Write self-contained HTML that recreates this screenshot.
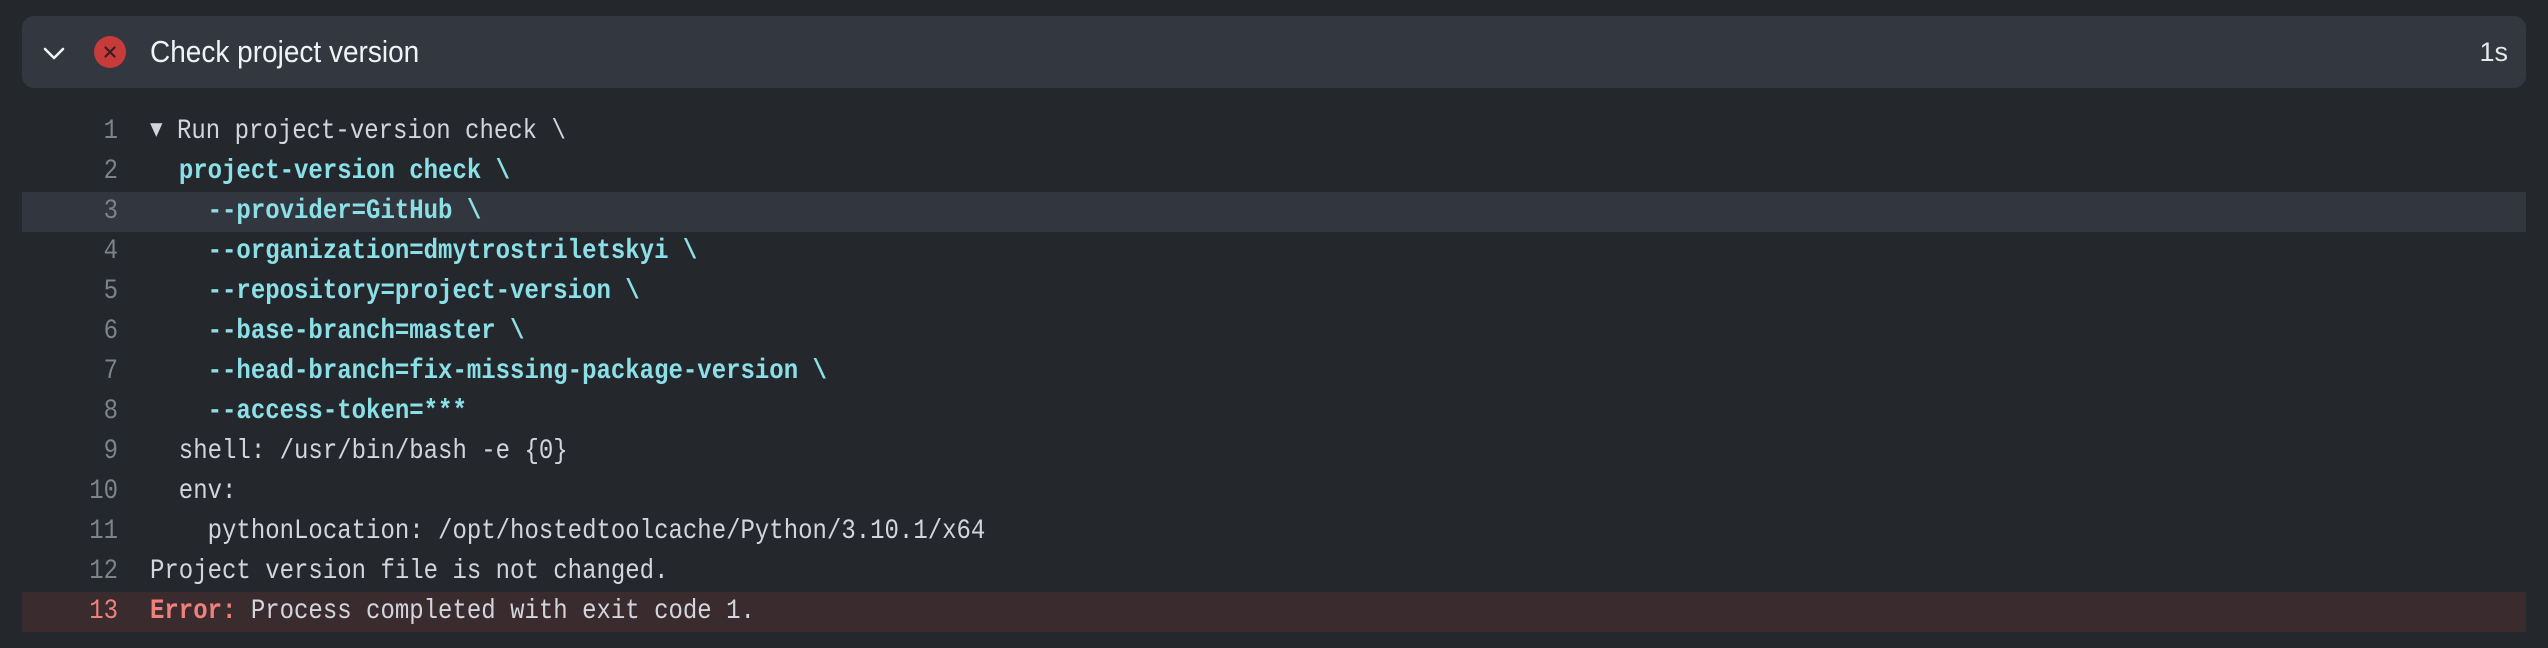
<!DOCTYPE html>
<html><head><meta charset="utf-8"><style>
html,body{margin:0;padding:0}
body{width:2548px;height:648px;background:#24272c;position:relative;overflow:hidden;font-family:"Liberation Sans",sans-serif}
.hdr{position:absolute;left:22px;top:16px;width:2504px;height:72px;background:#33373f;border-radius:12px}
.title{position:absolute;left:150px;top:16px;height:72px;line-height:72px;font-size:28px;color:#f0f3f6;transform:scaleY(1.1);transform-origin:left center}
.dur{position:absolute;right:40px;top:16px;height:72px;line-height:72px;font-size:27px;color:#e6e9ec}
.row{position:absolute;left:22px;width:2504px;height:40px;line-height:40px;font-family:"Liberation Mono",monospace;font-size:24px;color:#d2d6dc;white-space:pre}
.row .n{position:absolute;left:0;width:96px;text-align:right;color:#7d838b;transform:scaleY(1.15);transform-origin:center}
.row .t{position:absolute;left:128px;transform:scaleY(1.15);transform-origin:left center}
.c{color:#8be0e8;font-weight:bold}
.hl{background:#32363e}
.err{background:#3a2b2f}
.err .n{color:#f0807b}
.e{color:#f0807b;font-weight:bold}
.tri{font-size:21px;display:inline-block;width:27px;vertical-align:top;color:#d2d6dc}
</style></head><body>
<div class="hdr"></div>
<svg style="position:absolute;left:40px;top:44px" width="28" height="20" viewBox="0 0 28 20"><path d="M5 5 L14 14 L23 5" fill="none" stroke="#f0f3f6" stroke-width="2.6" stroke-linecap="round" stroke-linejoin="round"/></svg>
<svg style="position:absolute;left:94px;top:36px" width="32" height="32" viewBox="0 0 32 32"><circle cx="16" cy="16" r="16" fill="#c73b3b"/><path d="M11.5 11.5 L20.5 20.5 M20.5 11.5 L11.5 20.5" stroke="#3a1f22" stroke-width="2.2" stroke-linecap="round"/></svg>
<div class="title">Check project version</div>
<div class="dur">1s</div>

<div class="row" style="top:112px"><span class="n">1</span><span class="t"><span class="tri">▼</span>Run project-version check \</span></div>
<div class="row" style="top:152px"><span class="n">2</span><span class="t">  <span class="c">project-version check \</span></span></div>
<div class="row hl" style="top:192px"><span class="n">3</span><span class="t">    <span class="c">--provider=GitHub \</span></span></div>
<div class="row" style="top:232px"><span class="n">4</span><span class="t">    <span class="c">--organization=dmytrostriletskyi \</span></span></div>
<div class="row" style="top:272px"><span class="n">5</span><span class="t">    <span class="c">--repository=project-version \</span></span></div>
<div class="row" style="top:312px"><span class="n">6</span><span class="t">    <span class="c">--base-branch=master \</span></span></div>
<div class="row" style="top:352px"><span class="n">7</span><span class="t">    <span class="c">--head-branch=fix-missing-package-version \</span></span></div>
<div class="row" style="top:392px"><span class="n">8</span><span class="t">    <span class="c">--access-token=***</span></span></div>
<div class="row" style="top:432px"><span class="n">9</span><span class="t">  shell: /usr/bin/bash -e {0}</span></div>
<div class="row" style="top:472px"><span class="n">10</span><span class="t">  env:</span></div>
<div class="row" style="top:512px"><span class="n">11</span><span class="t">    pythonLocation: /opt/hostedtoolcache/Python/3.10.1/x64</span></div>
<div class="row" style="top:552px"><span class="n">12</span><span class="t">Project version file is not changed.</span></div>
<div class="row err" style="top:592px"><span class="n">13</span><span class="t"><span class="e">Error:</span> Process completed with exit code 1.</span></div>
</body></html>
